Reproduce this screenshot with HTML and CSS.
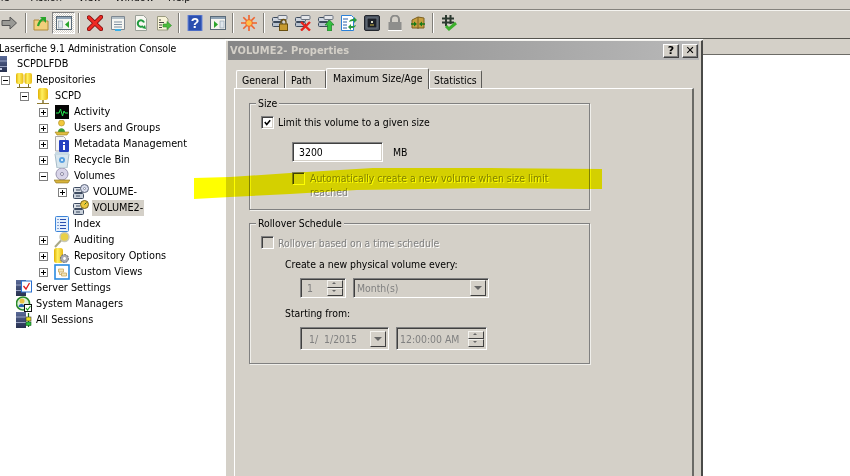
FILE: index.html
```html
<!DOCTYPE html>
<html lang="en">
<head>
<meta charset="utf-8">
<title>Laserfiche 9.1 Administration Console</title>
<link rel="stylesheet" href="styles.css">
</head>
<body>
<svg class="defs" width="0" height="0" aria-hidden="true">
  <defs>
    <linearGradient id="gold" x1="0" x2="1" y1="0" y2="0"><stop offset="0" stop-color="#e0b000"/><stop offset=".4" stop-color="#fff060"/><stop offset="1" stop-color="#e8b810"/></linearGradient>
    <linearGradient id="steel" x1="0" x2="0" y1="0" y2="1"><stop offset="0" stop-color="#5a6a98"/><stop offset="1" stop-color="#27304f"/></linearGradient>
    <symbol id="i-forward" viewBox="0 0 16 16"><path d="M1 5.500h8V2l6.500 6L9 14v-3.500H1z" fill="#9a9a96" stroke="#555" stroke-width="1"/></symbol>
    <symbol id="i-upfolder" viewBox="0 0 16 16"><path d="M1 5h5l1 1h8v9H1z" fill="#f2cf7c" stroke="#b08a3a"/><path d="M5 11C6 7 8 5 10 4" fill="none" stroke="#2aa52a" stroke-width="2.200"/><path d="M7 2h6v6z" fill="#2aa52a"/></symbol>
    <symbol id="i-pane" viewBox="0 0 16 16"><rect x=".5" y="1.500" width="15" height="13" fill="#f4f4f0" stroke="#5a6a78"/><rect x="1" y="2" width="14" height="2" fill="#8fa3b5"/><rect x="2.500" y="6" width="4" height="7" fill="#dfe6ec" stroke="#8898a8" stroke-width=".6"/><path d="M13 6v7l-4-3.500z" fill="#2aa52a"/></symbol>
    <symbol id="i-delete" viewBox="0 0 16 16"><path d="M2 2.500 14 14M14 2 2 14" stroke="#7a1010" stroke-width="4.400" stroke-linecap="round"/><path d="M2 2.500 14 14M14 2 2 14" stroke="#ee2a24" stroke-width="2.800" stroke-linecap="round"/></symbol>
    <symbol id="i-props" viewBox="0 0 16 16"><path d="M1.500 1.500h13v13h-13z" fill="#f6f6f2" stroke="#7d8790"/><rect x="2" y="2" width="12" height="2" fill="#b4c0c8"/><path d="M4 7h8M4 9.500h8M4 12h8" stroke="#7f8fa0"/><rect x="5" y="14" width="6" height="2" fill="#38b0e8"/></symbol>
    <symbol id="i-refresh" viewBox="0 0 16 16"><path d="M2.500 .5h8l3 3v12h-11z" fill="#f8f8f2" stroke="#9aa098"/><path d="M11 7.500a3.200 3.200 0 1 0-1 3.500" fill="none" stroke="#1f9a3e" stroke-width="2"/><path d="M9 13l3-3 1 4z" fill="#1f9a3e"/></symbol>
    <symbol id="i-export" viewBox="0 0 16 16"><path d="M1.500 1.500h8l2.500 2.500v11H1.500z" fill="#f8f4d8" stroke="#9a9a80"/><path d="M3 5h2M3 7.500h5M3 10h3M3 12.500h3" stroke="#444"/><path d="M7 9h4V6.500l4.500 4-4.500 4V12H7z" fill="#4cbc3c" stroke="#2d8a2a" stroke-width=".6"/></symbol>
    <symbol id="i-help" viewBox="0 0 16 16"><rect x="1" y="0" width="14" height="16" fill="#2c50b0" stroke="#6c88d8"/><text x="8" y="13" text-anchor="middle" font-family="Liberation Sans" font-weight="700" font-size="14" fill="#fff">?</text></symbol>
    <symbol id="i-action" viewBox="0 0 16 16"><rect x=".5" y="1.500" width="15" height="13" fill="#f4f4f0" stroke="#5a6a78"/><rect x="1" y="2" width="14" height="2" fill="#8fa3b5"/><rect x="10" y="6" width="4" height="7" fill="#dfe6ec" stroke="#8898a8" stroke-width=".6"/><path d="M4 6v7l4-3.500z" fill="#2aa52a"/></symbol>
    <symbol id="i-star" viewBox="0 0 16 16"><path d="M8 0v16M0 8h16M2.300 2.300l11.400 11.400M13.700 2.300 2.300 13.700" stroke="#f0622c" stroke-width="1.600"/><circle cx="8" cy="8" r="3.400" fill="#ffc04a" stroke="#f0622c"/></symbol>
    <g id="g-srv"><rect x=".5" y="2.500" width="10" height="4" rx="1" fill="#cdd4de" stroke="#3c4a5c"/><rect x=".5" y="7.500" width="10" height="4" rx="1" fill="#b8c2ce" stroke="#3c4a5c"/><rect x="6" y=".5" width="9" height="4" rx="1" fill="#e4e6ea" stroke="#6c7480"/></g>
    <symbol id="i-srvlock" viewBox="0 0 16 16"><use href="#g-srv"/><path d="M9 9V7a2.500 2.500 0 0 1 5 0v2" fill="none" stroke="#6a5010" stroke-width="1.300"/><rect x="7.500" y="9" width="8" height="6.500" fill="#c69a30" stroke="#6a5010"/></symbol>
    <symbol id="i-srvx" viewBox="0 0 16 16"><use href="#g-srv"/><path d="M6 7l9 8.500M15 7l-9 8.500" stroke="#e8241c" stroke-width="2.400"/></symbol>
    <symbol id="i-srvup" viewBox="0 0 16 16"><use href="#g-srv"/><path d="M11.500 5l4.500 5h-2.500v6h-4v-6H7z" fill="#34c040" stroke="#1b7d25" stroke-width=".7"/></symbol>
    <symbol id="i-docsync" viewBox="0 0 16 16"><path d="M.5.500h10l2 2v13H.5z" fill="#fff" stroke="#2a80d8"/><path d="M2 4h5M2 7h4M2 10h4M2 13h4" stroke="#2a60a8"/><path d="M8 7c1-3 3-3 5-3V2l3 3-3 3V6c-2 0-3 0-5 1z" fill="#2a9a40"/><path d="M15 10c-1 3-3 3-5 3v2l-3-3 3-3v2c2 0 3 0 5-1z" fill="#2a9a40"/></symbol>
    <symbol id="i-box" viewBox="0 0 16 16"><rect x=".5" y=".5" width="15" height="15" rx="1.500" fill="#4a525e" stroke="#23272e"/><rect x="3" y="3" width="10" height="10" fill="#1c2028" stroke="#6c7682"/><rect x="7" y="6" width="2" height="2" fill="#d8d8c0"/><path d="M6 10h4" stroke="#c8b040"/></symbol>
    <symbol id="i-lock" viewBox="0 0 16 16"><path d="M4 7V4.500a4 4 0 0 1 8 0V7" fill="none" stroke="#8a8a88" stroke-width="2"/><rect x="1.500" y="7" width="13" height="8" fill="#8e8e8c"/><path d="M1 15.500h14" stroke="#fff"/></symbol>
    <symbol id="i-gold" viewBox="0 0 16 16"><path d="M2 5l6-3 6 1v10H2z" fill="#c8a040" stroke="#7c6020"/><path d="M8 2v12" stroke="#7c6020"/><path d="M1 9h5M15 9h-5" stroke="#1a7a1a" stroke-width="1.500"/><path d="M7 9 4 6.500v5zM9 9l3-2.500v5z" fill="#1a7a1a"/></symbol>
    <symbol id="i-hash" viewBox="0 0 16 16"><path d="M5 0v11M9.500 0v9M1 3.500h12M1 7.500h12" stroke="#2c3a30" stroke-width="2"/><path d="M5 11l3 3 7-6" fill="none" stroke="#3cb02c" stroke-width="3"/></symbol>
    <symbol id="i-server" viewBox="0 0 16 16"><rect x="0" y="0" width="16" height="16" fill="url(#steel)"/><path d="M0 5h16M0 10.500h16" stroke="#9aa4c4"/><rect x="9" y="12" width="2" height="2" fill="#c8d0e8"/></symbol>
    <symbol id="i-repos" viewBox="0 0 16 16"><rect x="0" y="1" width="7.500" height="11" rx="2" fill="url(#gold)"/><rect x="8.500" y="1" width="7.500" height="11" rx="2" fill="url(#gold)"/><path d="M3.500 12v3M12.500 12v3M1 15.500h14" stroke="#807030"/></symbol>
    <symbol id="i-repo" viewBox="0 0 16 16"><rect x="3" y="0" width="10" height="12" rx="2.500" fill="url(#gold)"/><path d="M8 12v3" stroke="#807030" stroke-width="1.500"/><path d="M2 15.500h12" stroke="#907a30"/></symbol>
    <symbol id="i-activity" viewBox="0 0 16 16"><rect x="1" y="1" width="14" height="14" fill="#050505"/><path d="M2 9h3l1.500-4 2 7L10 7l1 2h3" fill="none" stroke="#25e850" stroke-width="1"/></symbol>
    <symbol id="i-users" viewBox="0 0 16 16"><circle cx="7.500" cy="3" r="3" fill="#f2c83c" stroke="#a88820" stroke-width=".6"/><path d="M4 12c0-5 7-5 7 0z" fill="#3aa03a"/><path d="M1 12h14l-2 3H3z" fill="#e2c040" stroke="#9a7a20" stroke-width=".6"/></symbol>
    <symbol id="i-meta" viewBox="0 0 16 16"><path d="M1.500.5h8l2 2V15h-10z" fill="#f6f6f6" stroke="#aaa"/><rect x="5" y="4" width="10" height="12" rx="1" fill="#2440c0"/><rect x="9" y="6" width="2" height="2" fill="#fff"/><rect x="9" y="9" width="2" height="5" fill="#fff"/></symbol>
    <symbol id="i-bin" viewBox="0 0 16 16"><path d="M1 2h14l-2 14H3z" fill="#d8e6ee" stroke="#a8bcc8"/><rect x="1" y="0" width="14" height="3" rx="1" fill="#c8dae4"/><circle cx="8" cy="8" r="3" fill="#58a0e0"/><path d="M7 8h2M8 7v2" stroke="#fff"/></symbol>
    <symbol id="i-volumes" viewBox="0 0 16 16"><circle cx="8" cy="6" r="6" fill="#d8d4e8" stroke="#9a96b0"/><circle cx="8" cy="6" r="1.500" fill="#fff" stroke="#8884a0"/><path d="M0 12h16l-2 3H2z" fill="#d8b43c" stroke="#8a7020" stroke-width=".6"/></symbol>
    <symbol id="i-vol" viewBox="0 0 16 16"><rect x=".5" y="3.500" width="10" height="5" rx="1" fill="#dde2e8" stroke="#3c4a60"/><rect x=".5" y="9.500" width="10" height="5" rx="1" fill="#c8d0da" stroke="#3c4a60"/><path d="M3 6h4M3 12h4" stroke="#3c4a60"/><circle cx="11.500" cy="4.500" r="4" fill="#d8dcec" stroke="#5a6478"/><circle cx="11.500" cy="4.500" r="1" fill="#fff" stroke="#5a6478" stroke-width=".6"/></symbol>
    <symbol id="i-vol2" viewBox="0 0 16 16"><rect x=".5" y="3.500" width="10" height="5" rx="1" fill="#dde2e8" stroke="#3c4a60"/><rect x=".5" y="9.500" width="10" height="5" rx="1" fill="#c8d0da" stroke="#3c4a60"/><path d="M3 6h4M3 12h4" stroke="#3c4a60"/><circle cx="11.500" cy="4.500" r="4" fill="#ecc83c" stroke="#7c6820"/><path d="M11.500 4.500l2-2" stroke="#2a6a2a"/></symbol>
    <symbol id="i-index" viewBox="0 0 16 16"><rect x="1.500" y=".5" width="13" height="15" rx="1" fill="#e4f0fc" stroke="#3c84d8"/><path d="M6 3.500h6M6 6.500h6M6 9.500h6M6 12.500h6M3.500 3.500h1M3.500 6.500h1M3.500 9.500h1M3.500 12.500h1" stroke="#2a50b0"/></symbol>
    <symbol id="i-audit" viewBox="0 0 16 16"><circle cx="10.500" cy="5" r="4.500" fill="#e8d048" stroke="#c8c8b8" stroke-width="1.400"/><path d="M7 8.500 1 15" stroke="#a8a888" stroke-width="2"/></symbol>
    <symbol id="i-opts" viewBox="0 0 16 16"><rect x="0" y="0" width="9" height="15" rx="2.500" fill="url(#gold)"/><circle cx="10.500" cy="10.500" r="4" fill="#a8aab0" stroke="#5c6068" stroke-dasharray="2 1"/><circle cx="10.500" cy="10.500" r="1.400" fill="#fff"/></symbol>
    <symbol id="i-views" viewBox="0 0 16 16"><rect x="1" y="1" width="14" height="14" fill="#fff" stroke="#2a8ae0" stroke-width="1.600"/><path d="M4.500 5h5v3h-5zM7.500 9h5v3h-5zM5.500 8v2.500h2" fill="#f2e4b8" stroke="#c8a860" stroke-width=".8"/></symbol>
    <symbol id="i-settings" viewBox="0 0 16 16"><rect x="0" y="0" width="10" height="16" fill="url(#steel)"/><path d="M0 5h10M0 10.500h10" stroke="#9aa4c4"/><rect x="5.500" y="1" width="10" height="11" fill="#fff" stroke="#2a70d0"/><path d="M7.500 6l2.500 3 3.500-6" fill="none" stroke="#e01c1c" stroke-width="1.300"/></symbol>
    <symbol id="i-managers" viewBox="0 0 16 16"><circle cx="7" cy="7.500" r="6.500" fill="#dff0d8" stroke="#2a8a2a" stroke-width="1.600"/><circle cx="6" cy="5" r="2.500" fill="#e8c040"/><path d="M2.500 11c0-4 6-4 6 0z" fill="#2a60b0"/><rect x="8.500" y="8.500" width="7" height="7" fill="#fff" stroke="#111"/><path d="M10 12l1.500 2 3-4" fill="none" stroke="#1e9a1e" stroke-width="1.200"/></symbol>
    <symbol id="i-sessions" viewBox="0 0 16 16"><rect x="0" y="0" width="10" height="16" fill="url(#steel)"/><path d="M0 5h10M0 10.500h10" stroke="#9aa4c4"/><path d="M12.500 1v14" stroke="#1a6a1a" stroke-width="1.200"/><rect x="10" y="5" width="5" height="4" fill="#e8e020" stroke="#333" stroke-width=".6"/><rect x="10" y="10" width="5" height="3.500" fill="#2ac040" stroke="#1a5a1a" stroke-width=".6"/></symbol>
  </defs>
</svg>

<div class="app">
  <nav class="menubar">
    <span class="menu menu-file">File</span>
    <span class="menu menu-action">Action</span>
    <span class="menu menu-view">View</span>
    <span class="menu menu-window">Window</span>
    <span class="menu">Help</span>
  </nav>

  <div class="toolbar">
    <span class="tool tool-first"><svg class="ico"><use href="#i-forward"/></svg></span>
    <span class="sep"></span>
    <span class="tool tool-up"><svg class="ico"><use href="#i-upfolder"/></svg></span>
    <span class="tool tool-on"><svg class="ico"><use href="#i-pane"/></svg></span>
    <span class="sep"></span>
    <span class="tool"><svg class="ico"><use href="#i-delete"/></svg></span>
    <span class="tool"><svg class="ico"><use href="#i-props"/></svg></span>
    <span class="tool"><svg class="ico"><use href="#i-refresh"/></svg></span>
    <span class="tool"><svg class="ico"><use href="#i-export"/></svg></span>
    <span class="sep"></span>
    <span class="tool"><svg class="ico"><use href="#i-help"/></svg></span>
    <span class="tool"><svg class="ico"><use href="#i-action"/></svg></span>
    <span class="sep"></span>
    <span class="tool"><svg class="ico"><use href="#i-star"/></svg></span>
    <span class="sep"></span>
    <span class="tool"><svg class="ico"><use href="#i-srvlock"/></svg></span>
    <span class="tool"><svg class="ico"><use href="#i-srvx"/></svg></span>
    <span class="tool"><svg class="ico"><use href="#i-srvup"/></svg></span>
    <span class="tool"><svg class="ico"><use href="#i-docsync"/></svg></span>
    <span class="tool"><svg class="ico"><use href="#i-box"/></svg></span>
    <span class="tool"><svg class="ico"><use href="#i-lock"/></svg></span>
    <span class="tool"><svg class="ico"><use href="#i-gold"/></svg></span>
    <span class="sep"></span>
    <span class="tool"><svg class="ico"><use href="#i-hash"/></svg></span>
  </div>

  <main class="workspace">
    <section class="tree">
      <div class="row lv0 row-root"><span class="label">Laserfiche 9.1 Administration Console</span></div>
      <div class="row lv0 row-server"><svg class="ico"><use href="#i-server"/></svg><span class="label">SCPDLFDB</span></div>
      <div class="row lv1"><span class="exp minus"></span><svg class="ico"><use href="#i-repos"/></svg><span class="label">Repositories</span></div>
      <div class="row lv2"><span class="exp minus"></span><svg class="ico"><use href="#i-repo"/></svg><span class="label">SCPD</span></div>
      <div class="row lv3"><span class="exp plus"></span><svg class="ico"><use href="#i-activity"/></svg><span class="label">Activity</span></div>
      <div class="row lv3"><span class="exp plus"></span><svg class="ico"><use href="#i-users"/></svg><span class="label">Users and Groups</span></div>
      <div class="row lv3"><span class="exp plus"></span><svg class="ico"><use href="#i-meta"/></svg><span class="label">Metadata Management</span></div>
      <div class="row lv3"><span class="exp plus"></span><svg class="ico"><use href="#i-bin"/></svg><span class="label">Recycle Bin</span></div>
      <div class="row lv3"><span class="exp minus"></span><svg class="ico"><use href="#i-volumes"/></svg><span class="label">Volumes</span></div>
      <div class="row lv4"><span class="exp plus"></span><svg class="ico"><use href="#i-vol"/></svg><span class="label">VOLUME-</span></div>
      <div class="row lv4"><span class="exp none"></span><svg class="ico"><use href="#i-vol2"/></svg><span class="label selected">VOLUME2-</span></div>
      <div class="row lv3"><span class="exp none"></span><svg class="ico"><use href="#i-index"/></svg><span class="label">Index</span></div>
      <div class="row lv3"><span class="exp plus"></span><svg class="ico"><use href="#i-audit"/></svg><span class="label">Auditing</span></div>
      <div class="row lv3"><span class="exp plus"></span><svg class="ico"><use href="#i-opts"/></svg><span class="label">Repository Options</span></div>
      <div class="row lv3"><span class="exp plus"></span><svg class="ico"><use href="#i-views"/></svg><span class="label">Custom Views</span></div>
      <div class="row lv1"><span class="exp none"></span><svg class="ico"><use href="#i-settings"/></svg><span class="label">Server Settings</span></div>
      <div class="row lv1"><span class="exp none"></span><svg class="ico"><use href="#i-managers"/></svg><span class="label">System Managers</span></div>
      <div class="row lv1"><span class="exp none"></span><svg class="ico"><use href="#i-sessions"/></svg><span class="label">All Sessions</span></div>
    </section>
    <section class="detail">
      <div class="detail-head"></div>
    </section>

    <div class="dialog">
      <header class="titlebar">
        <span class="title">VOLUME2- Properties</span>
        <span class="capbtn capbtn-help">?</span>
        <span class="capbtn capbtn-close">✕</span>
      </header>
      <div class="tabs">
        <span class="tab tab-general">General</span>
        <span class="tab tab-path">Path</span>
        <span class="tab tab-active">Maximum Size/Age</span>
        <span class="tab tab-stats">Statistics</span>
      </div>
      <div class="page">
        <div class="group">
          <span class="legend">Size</span>
          <div class="check-row">
            <span class="check checked"><svg class="tick" viewBox="0 0 9 9"><path d="M1 4l2.500 3L8 1.500" fill="none" stroke="#000" stroke-width="2"/></svg></span>
            <span class="check-text">Limit this volume to a given size</span>
          </div>
          <div class="size-row">
            <span class="field field-size">3200</span>
            <span>MB</span>
          </div>
          <div class="check-row auto-row off">
            <span class="check"></span>
            <span class="wrap">Automatically create a new volume when size limit reached</span>
          </div>
        </div>

        <div class="group group-roll">
          <span class="legend">Rollover Schedule</span>
          <div class="check-row off">
            <span class="check"></span>
            <span>Rollover based on a time schedule</span>
          </div>
          <div class="sub-label sub-create">Create a new physical volume every:</div>
          <div class="ctl-row">
            <span class="field field-num"><span class="val">1</span><span class="spin"><i class="up"></i><i class="down"></i></span></span>
            <span class="field field-unit"><span class="val">Month(s)</span><span class="drop"></span></span>
          </div>
          <div class="sub-label sub-start">Starting from:</div>
          <div class="ctl-row">
            <span class="field field-date"><span class="val val-date">1/&nbsp; 1/2015</span><span class="drop"></span></span>
            <span class="field field-time"><span class="val">12:00:00 AM</span><span class="spin"><i class="up"></i><i class="down"></i></span></span>
          </div>
        </div>
      </div>
    </div>

    <svg class="marker" viewBox="0 0 412 36" aria-hidden="true">
      <path d="M0 10 36 9 96 5 179 0 296 0 408 1V21L393 21 296 20 163 22 96 26 36 29 0 31Z" fill="#ffff00"/>
    </svg>
  </main>
</div>
</body>
</html>
```

FILE: styles.css
```css
* { box-sizing: border-box; }
html, body { margin: 0; height: 100%; overflow: hidden; }
body { background: #d4d0c8; font: 10.400px/14px "DejaVu Sans Condensed", "DejaVu Sans", sans-serif; color: #000; }
.defs { position: absolute; }
.app { width: 850px; height: 476px; display: flex; flex-direction: column; overflow: hidden; }

.menubar { height: 9px; display: flex; align-items: flex-end; margin-left: -7px; overflow: hidden; flex: none; }
.menu { display: block; line-height: 14px; margin-bottom: 4px; color: #111; font-size: 11px; }
.menu-file { width: 38px; }
.menu-action { width: 47px; }
.menu-view { width: 37px; }
.menu-window { width: 53px; }

.toolbar { height: 25px; flex: none; display: flex; align-items: center; border-top: 1px solid #85837d; box-shadow: inset 0 1px #f5f4f0; padding-top: 1px; }
.tool { width: 23px; height: 22px; flex: none; display: flex; align-items: center; justify-content: center; }
.tool-first { margin-left: -3px; margin-right: 2px; }
.tool-up { margin-left: -1px; }
.tool-on { border: 1px solid; border-color: #808080 #fff #fff #808080; background: repeating-conic-gradient(#fff 0 25%, #d4d0c8 0 50%) 0 0 / 2px 2px; }
.sep { width: 2px; height: 20px; margin: 0 3px; flex: none; border-left: 1px solid #807e78; border-right: 1px solid #fff; }
.ico { width: 16px; height: 16px; flex: none; display: block; }

.workspace { flex: 1; min-height: 0; position: relative; display: flex; margin-top: 4px; border-top: 1px solid #55544f; box-shadow: inset 0 1px #f8f8f6; }

.tree { width: 225px; flex: none; background: #fff; overflow: hidden; margin-top: 1px; font-size: 10.800px; }
.row { height: 16px; display: flex; align-items: center; white-space: nowrap; }
.exp { width: 9px; height: 9px; flex: none; margin-right: 6px; position: relative; }
.plus, .minus { border: 1px solid #808080; background: #fff; }
.plus::before, .minus::before { content: ""; position: absolute; left: 1px; top: 3px; width: 5px; height: 1px; background: #000; }
.plus::after { content: ""; position: absolute; left: 3px; top: 1px; width: 1px; height: 5px; background: #000; }
.label { margin-left: 3px; padding: 1px; line-height: 14px; }
.selected { background: #d4d0c8; }
.lv0 { margin-left: -5px; font-size: 10.400px; }
.row-server { margin-left: -9px; font-size: 10.800px; }
.row-server .label { margin-left: 9px; }
.lv1 { padding-left: 1px; }
.lv2 { padding-left: 20px; }
.lv3 { padding-left: 39px; }
.lv4 { padding-left: 58px; }

.detail { flex: 1; background: #fff; display: flex; flex-direction: column; }
.detail-head { height: 16px; background: #d4d0c8; border-bottom: 1px solid #6c6b66; margin-left: 478px; }

.dialog { position: absolute; left: 226px; top: 1px; bottom: 0; width: 477px; background: #d4d0c8; border-right: 2px solid #4a4a48; border-top: 1px solid #f4f3ef; padding-left: 2px; display: flex; flex-direction: column; }
.titlebar { height: 19px; flex: none; margin-right: 2px; background: linear-gradient(90deg, #868686, #b8b8b8); display: flex; align-items: center; padding: 0 1px 0 2px; }
.title { font-weight: 700; font-size: 11px; color: #d4d0c8; flex: 1; }
.capbtn { width: 16px; height: 14px; background: #d4d0c8; border: 1px solid; border-color: #fff #404040 #404040 #fff; box-shadow: inset -1px -1px #808080; font: 700 11px/12px "DejaVu Sans", sans-serif; text-align: center; }
.capbtn-help { margin-right: 3px; }

.tabs { display: flex; align-items: flex-end; height: 20px; margin: 8px 0 0 8px; flex: none; position: relative; z-index: 1; }
.tab { height: 18px; line-height: 18px; border: 1px solid #fff; border-bottom: 0; border-right-color: #5c5b58; border-radius: 2px 2px 0 0; padding-left: 5px; flex: none; }
.tab-general { width: 49px; }
.tab-path { width: 41px; }
.tab-active { width: 103px; height: 21px; margin-bottom: -1px; background: #d4d0c8; padding-left: 6px; }
.tab-stats { width: 53px; padding-left: 4px; }

.page { flex: 1; margin: 0 7px 0 6px; border: 1px solid #fff; border-right: 2px solid #6a6a66; border-bottom: 0; padding: 14px 0 0 14px; }
.group { position: relative; width: 341px; height: 107px; border: 1px solid #808080; box-shadow: 1px 1px #f0efeb, inset 1px 1px #f0efeb; padding: 12px 0 0 11px; }
.group-roll { height: 141px; margin-top: 13px; }
.legend { position: absolute; left: 6px; top: -8px; background: #d4d0c8; padding: 0 2px; }

.check-row { display: flex; align-items: center; gap: 4px; height: 13px; }
.check { width: 13px; height: 13px; flex: none; border: 1px solid; border-color: #808080 #fff #fff #808080; box-shadow: inset 1px 1px #404040, inset -1px -1px #d4d0c8; display: block; }
.checked { background: #fff; padding: 2px; }
.tick { width: 7px; height: 7px; display: block; }
.check-text { margin-top: -1px; }
.off { color: #808080; text-shadow: 1px 1px #fff; }
.off .check { background: transparent; }

.size-row { display: flex; align-items: center; gap: 10px; margin: 13px 0 0 31px; height: 20px; }
.auto-row { margin: 10px 0 0 31px; align-items: flex-start; height: auto; gap: 5px; }
.wrap { width: 255px; margin-top: -1px; }

.field { display: flex; align-items: center; height: 20px; flex: none; border: 1px solid; border-color: #808080 #fff #fff #808080; box-shadow: inset 1px 1px #404040, inset -1px -1px #d4d0c8; padding-left: 6px; }
.field-size { width: 91px; background: #fff; }
.ctl-row { display: flex; gap: 7px; margin-left: 39px; }
.field-num { width: 46px; margin-top: 7px; color: #808080; }
.field-unit { width: 136px; margin-top: 7px; color: #808080; padding-left: 3px; }
.field-date { width: 89px; height: 23px; color: #808080; }
.field-time { width: 91px; height: 23px; color: #808080; padding-left: 3px; }
.val { flex: 1; white-space: nowrap; }
.val-date { padding-left: 2px; }
.spin { width: 16px; height: 16px; margin-right: 2px; display: flex; flex-direction: column; flex: none; }
.spin i { flex: 1; display: block; position: relative; border: 1px solid; border-color: #f4f3ef #404040 #404040 #f4f3ef; }
.spin i::after { content: ""; position: absolute; left: 4px; top: 1px; border: 2px solid transparent; }
.spin .up::after { border-bottom-color: #666; border-top-width: 0; }
.spin .down::after { border-top-color: #666; border-bottom-width: 0; }
.drop { width: 16px; height: 16px; margin-right: 2px; flex: none; position: relative; border: 1px solid; border-color: #f4f3ef #404040 #404040 #f4f3ef; }
.drop::after { content: ""; position: absolute; left: 3px; top: 5px; border: 4px solid transparent; border-top-color: #666; border-bottom-width: 0; }

.sub-label { margin-left: 24px; }
.sub-create { margin-top: 8px; }
.sub-start { margin-top: 8px; margin-bottom: 7px; }

.marker { position: absolute; left: 194px; top: 129px; width: 412px; height: 36px; mix-blend-mode: multiply; pointer-events: none; }
```
